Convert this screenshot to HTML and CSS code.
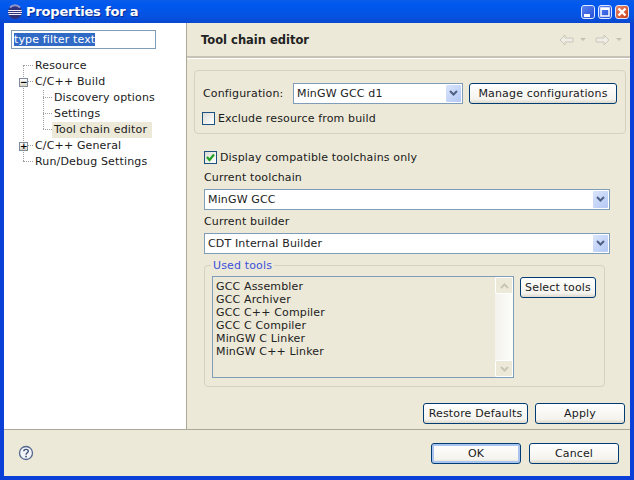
FILE: index.html
```html
<!DOCTYPE html>
<html lang="en">
<head>
    <meta charset="UTF-8">
    <title>Properties for a</title>
    <link rel="stylesheet" href="styles.css">
</head>
<body>
    <div class="window">
        <div class="titlebar">
            <svg class="app-icon" width="16" height="16" viewBox="0 0 16 16">
                <circle cx="8" cy="8" r="7" fill="#2f3278"/>
                <path d="M1.200 6.500h13.600M1 8.500h14M1.600 10.500h12.800" stroke="#eef" stroke-width="1"/>
                <path d="M3 3.500a6.500 6.500 0 0 1 10 0" stroke="#8f92cc" stroke-width="2" fill="none"/>
            </svg>
            <span class="title">Properties for a</span>
            <div class="win-buttons">
                <span class="win-btn"><svg width="12" height="12" viewBox="0 0 12 12"><rect x="2" y="8" width="6" height="3" fill="#fff"/></svg></span>
                <span class="win-btn"><svg width="12" height="12" viewBox="0 0 12 12"><rect x="2" y="2" width="8" height="8" fill="none" stroke="#fff" stroke-width="1.500"/><path d="M2 3h8" stroke="#fff" stroke-width="2"/></svg></span>
                <span class="win-btn win-close"><svg width="12" height="12" viewBox="0 0 12 12"><path d="M2.500 2.500l7 7M9.500 2.500l-7 7" stroke="#fff" stroke-width="2.400"/></svg></span>
            </div>
        </div>

        <div class="main">
            <div class="sidebar">
                <div class="filter"><span class="filter-sel">type filter text</span></div>
                <div class="tree">
                    <span class="trunk trunk-outer"></span>
                    <span class="trunk trunk-inner"></span>
                    <div class="tree-row lvl1"><span class="dots"></span>Resource</div>
                    <div class="tree-row lvl1"><span class="dots"></span><span class="expander">&minus;</span>C/C++ Build</div>
                    <div class="tree-row lvl2"><span class="dots"></span>Discovery options</div>
                    <div class="tree-row lvl2"><span class="dots"></span>Settings</div>
                    <div class="tree-row lvl2"><span class="dots"></span><span class="tree-sel">Tool chain editor</span></div>
                    <div class="tree-row lvl1"><span class="dots"></span><span class="expander">+</span>C/C++ General</div>
                    <div class="tree-row lvl1"><span class="dots"></span>Run/Debug Settings</div>
                </div>
            </div>

            <div class="content">
                <div class="page-head">
                    <h1>Tool chain editor</h1>
                    <div class="nav">
                        <svg width="15" height="12" viewBox="0 0 15 12"><path d="M1 6l5-5v3h8v4H6v3z" fill="#f0eee4" stroke="#c9c7ba"/></svg>
                        <span class="nav-drop"></span>
                        <svg class="nav-fwd" width="15" height="12" viewBox="0 0 15 12"><path d="M14 6L9 1v3H1v4h8v3z" fill="#f0eee4" stroke="#c9c7ba"/></svg>
                        <span class="nav-drop"></span>
                    </div>
                </div>

                <div class="page-body">
                    <div class="config-box">
                        <div class="config-row">
                            <span class="config-label">Configuration:</span>
                            <div class="combo combo-config">
                                <span class="combo-text">MinGW GCC d1</span>
                                <span class="combo-arrow"><svg width="9" height="7" viewBox="0 0 9 7"><path d="M1 1l3.500 3.500L8 1" fill="none" stroke="#4d6185" stroke-width="2"/></svg></span>
                            </div>
                            <button class="btn btn-manage">Manage configurations</button>
                        </div>
                        <div class="check-row">
                            <span class="check"></span>Exclude resource from build
                        </div>
                    </div>

                    <div class="toolchain">
                        <div class="check-row">
                            <span class="check"><svg width="11" height="11" viewBox="0 0 11 11"><path d="M2 5l2.500 3L9 2.500" fill="none" stroke="#21a121" stroke-width="2.200"/></svg></span>Display compatible toolchains only
                        </div>
                        <div class="field-label label-toolchain">Current toolchain</div>
                        <div class="combo combo-wide">
                            <span class="combo-text">MinGW GCC</span>
                            <span class="combo-arrow"><svg width="9" height="7" viewBox="0 0 9 7"><path d="M1 1l3.500 3.500L8 1" fill="none" stroke="#4d6185" stroke-width="2"/></svg></span>
                        </div>
                        <div class="field-label label-builder">Current builder</div>
                        <div class="combo combo-wide">
                            <span class="combo-text">CDT Internal Builder</span>
                            <span class="combo-arrow"><svg width="9" height="7" viewBox="0 0 9 7"><path d="M1 1l3.500 3.500L8 1" fill="none" stroke="#4d6185" stroke-width="2"/></svg></span>
                        </div>

                        <div class="tools-box">
                            <span class="tools-legend">Used tools</span>
                            <div class="tools-list">
                                <div class="tools-items">
                                    <div>GCC Assembler</div>
                                    <div>GCC Archiver</div>
                                    <div>GCC C++ Compiler</div>
                                    <div>GCC C Compiler</div>
                                    <div>MinGW C Linker</div>
                                    <div>MinGW C++ Linker</div>
                                </div>
                                <div class="scrollbar">
                                    <span class="scroll-btn"><svg width="9" height="6" viewBox="0 0 9 6"><path d="M1 5l3.500-3.500L8 5" fill="none" stroke="#c8c6b8" stroke-width="2"/></svg></span>
                                    <span class="scroll-btn"><svg width="9" height="6" viewBox="0 0 9 6"><path d="M1 1l3.500 3.500L8 1" fill="none" stroke="#c8c6b8" stroke-width="2"/></svg></span>
                                </div>
                            </div>
                            <button class="btn btn-select">Select tools</button>
                        </div>
                    </div>

                    <div class="page-buttons">
                        <button class="btn btn-restore">Restore Defaults</button>
                        <button class="btn btn-apply">Apply</button>
                    </div>
                </div>
            </div>
        </div>

        <div class="footer">
            <svg class="help" width="16" height="16" viewBox="0 0 16 16">
                <circle cx="8" cy="8" r="6.500" fill="#f3f5f8" stroke="#53678c" stroke-width="1.300"/>
                <path d="M5.800 6.200C5.800 3.800 10.300 3.800 10.300 6.200C10.300 7.800 8 7.800 8 9.800" fill="none" stroke="#3d5078" stroke-width="1.400"/>
                <rect x="7.200" y="10.800" width="1.600" height="1.600" fill="#3d5078"/>
            </svg>
            <button class="btn btn-dialog btn-default">OK</button>
            <button class="btn btn-dialog">Cancel</button>
        </div>
    </div>
</body>
</html>
```
FILE: styles.css
```css
* {
    box-sizing: border-box;
}

body {
    margin: 0;
    font-family: "DejaVu Sans", sans-serif;
    font-size: 11px;
    letter-spacing: 0.15px;
    color: #1a1a1a;
    background-color: #ece9d8;
}

.window {
    width: 634px;
    height: 480px;
    display: flex;
    flex-direction: column;
    background-color: #ece9d8;
    border-left: 4px solid #0a3fd8;
    border-right: 4px solid #0a3fd8;
    border-bottom: 4px solid #0a3fd8;
}

/* title bar */

.titlebar {
    height: 23px;
    margin: 0 -4px;
    padding: 0 5px 0 7px;
    display: flex;
    align-items: center;
    background: linear-gradient(#0a5be8, #0058ee 20%, #0553e2 70%, #0a47cf);
    color: #fff;
}

.app-icon {
    margin-right: 3px;
}

.title {
    font-size: 13px;
    font-weight: bold;
    letter-spacing: -0.2px;
    text-shadow: 1px 1px #0a2a90;
}

.win-buttons {
    margin-left: auto;
    display: flex;
    gap: 3px;
}

.win-btn {
    width: 14px;
    height: 14px;
    display: block;
    border: 1px solid #dfe8ff;
    border-radius: 3px;
    background: linear-gradient(135deg, #5a82f0, #2450d8);
    overflow: hidden;
}

.win-btn svg {
    display: block;
}

.win-close {
    background: linear-gradient(135deg, #e88a6a, #c8401c);
}

/* main area */

.main {
    height: 407px;
    display: flex;
    border-bottom: 1px solid #aca899;
}

.sidebar {
    width: 184px;
    background-color: #fff;
    border-right: 1px solid #aca899;
    padding: 7px 8px 7px 7px;
}

.filter {
    width: 145px;
    height: 19px;
    border: 1px solid #7f9db9;
    padding: 1px 2px;
    line-height: 15px;
    white-space: nowrap;
}

.filter-sel {
    background-color: #316ac5;
    color: #fff;
}

.tree {
    position: relative;
    margin: 9px 0 0 1px;
}

.tree-row {
    position: relative;
    height: 16px;
    line-height: 16px;
    white-space: nowrap;
}

.lvl1 {
    padding-left: 23px;
}

.lvl2 {
    padding-left: 42px;
}

.trunk {
    position: absolute;
    border-left: 1px dotted #a0a0a0;
}

.trunk-outer {
    left: 11px;
    top: 7px;
    height: 96px;
}

.trunk-inner {
    left: 31px;
    top: 32px;
    height: 39px;
}

.dots {
    position: absolute;
    top: 7px;
    border-top: 1px dotted #a0a0a0;
}

.lvl1 .dots {
    left: 11px;
    width: 10px;
}

.lvl2 .dots {
    left: 31px;
    width: 9px;
}

.expander {
    position: absolute;
    left: 7px;
    top: 4px;
    width: 9px;
    height: 9px;
    border: 1px solid #7f8a9d;
    background: linear-gradient(#fff, #d8d4c4);
    font-size: 9px;
    line-height: 7px;
    text-align: center;
    font-weight: bold;
    color: #000;
}

.tree-sel {
    display: inline-block;
    margin-left: -2px;
    padding: 0 5px 0 2px;
    background-color: #ece9d8;
}

/* right page */

.content {
    flex: 1;
    display: flex;
    flex-direction: column;
}

.page-head {
    height: 35px;
    padding: 0 8px 0 14px;
    display: flex;
    align-items: center;
    justify-content: space-between;
    border-bottom: 2px solid #c6c3b6;
    box-shadow: 0 1px 0 #fff;
}

.page-head h1 {
    margin: 0;
    font-size: 11.500px;
    font-weight: bold;
    letter-spacing: 0;
    color: #222;
}

.nav {
    display: flex;
    align-items: center;
}

.nav-drop {
    margin-left: 6px;
    border-top: 3px solid #c4c2b5;
    border-left: 3px solid transparent;
    border-right: 3px solid transparent;
}

.nav-fwd {
    margin-left: 9px;
}

.page-body {
    padding: 12px 4px 0 7px;
    display: flex;
    flex-direction: column;
}

.config-box {
    height: 64px;
    padding: 12px 8px 0 8px;
    border: 1px solid #d5d2c0;
    border-radius: 4px;
}

.config-row {
    height: 21px;
    display: flex;
    align-items: center;
}

.config-label {
    width: 90px;
}

.combo {
    height: 21px;
    display: flex;
    align-items: center;
    justify-content: space-between;
    padding: 1px 1px 1px 3px;
    border: 1px solid #7f9db9;
    background-color: #fff;
    color: #222;
}

.combo-config {
    width: 170px;
}

.combo-wide {
    width: 406px;
}

.combo-arrow {
    width: 15px;
    height: 17px;
    display: flex;
    align-items: center;
    justify-content: center;
    background: linear-gradient(135deg, #dbe5fb, #b2c8f5);
    border-radius: 1px;
}

.btn {
    height: 21px;
    padding: 0;
    font-family: inherit;
    font-size: 11px;
    letter-spacing: inherit;
    color: #1a1a1a;
    border: 1px solid #003c74;
    border-radius: 3px;
    background: linear-gradient(#fff, #f4f3ee 80%, #dcd8ca);
}

.btn-manage {
    width: 148px;
    margin-left: 6px;
}

.check-row {
    display: flex;
    align-items: center;
    height: 13px;
}

.config-box .check-row {
    margin: 8px 0 0 -1px;
}

.check {
    width: 13px;
    height: 13px;
    margin-right: 3px;
    border: 1px solid #1c5180;
    background: linear-gradient(135deg, #dcdcd6, #fff);
}

.check svg {
    display: block;
}

.toolchain {
    padding: 17px 0 0 10px;
}

.field-label {
    line-height: 13px;
}

.label-toolchain {
    margin-top: 7px;
    margin-bottom: 5px;
}

.label-builder {
    margin-top: 5px;
    margin-bottom: 5px;
}

.tools-box {
    position: relative;
    width: 401px;
    height: 122px;
    margin-top: 11px;
    padding: 10px 8px 0 7px;
    display: flex;
    border: 1px solid #d5d2c0;
    border-radius: 4px;
}

.tools-legend {
    position: absolute;
    left: 6px;
    top: -7px;
    padding: 0 2px;
    line-height: 13px;
    background-color: #ece9d8;
    color: #3c50d8;
}

.tools-list {
    width: 302px;
    height: 102px;
    display: flex;
    justify-content: space-between;
    border: 1px solid #7f9db9;
}

.tools-items {
    padding: 3px 3px;
    line-height: 13px;
    color: #222;
}

.scrollbar {
    width: 18px;
    display: flex;
    flex-direction: column;
    justify-content: space-between;
    background: linear-gradient(90deg, #f3f2ec, #fdfdfa);
}

.scroll-btn {
    height: 17px;
    display: flex;
    align-items: center;
    justify-content: center;
    background-color: #ece9d8;
    border: 1px solid #fff;
    border-radius: 2px;
}

.btn-select {
    width: 76px;
    margin-left: 6px;
    margin-top: 1px;
}

.page-buttons {
    display: flex;
    justify-content: flex-end;
    gap: 7px;
    margin-top: 16px;
    margin-right: 1px;
}

.btn-restore {
    width: 105px;
}

.btn-apply {
    width: 90px;
}

/* footer */

.footer {
    flex: 1;
    display: flex;
    align-items: center;
    padding: 0 11px 0 14px;
    gap: 8px;
}

.help {
    margin-right: auto;
}

.btn-dialog {
    width: 90px;
}

.btn-default {
    box-shadow: inset 0 0 0 2px #a9c4ef;
}
```
